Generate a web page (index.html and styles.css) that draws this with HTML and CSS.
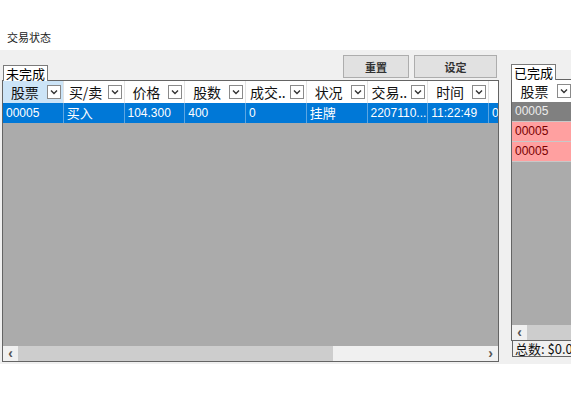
FILE: index.html
```html
<!DOCTYPE html>
<html>
<head>
<meta charset="utf-8">
<link rel="stylesheet" href="styles.css">
</head>
<body>
<div class="title">交易状态</div>
<div class="main">
  <div class="left">
    <div class="bar">
      <div class="tab">未完成</div>
      <div class="btns">
        <div class="btn b1">重置</div>
        <div class="btn b2">设定</div>
      </div>
    </div>
    <div class="grid">
      <div class="hrow">
        <div class="hc sel"><span class="ht">股票</span><span class="dd"><svg viewBox="0 0 8 8" width="8" height="8"><path d="M1 2.5 L4 5.5 L7 2.5" fill="none" stroke="#333" stroke-width="1.4"/></svg></span></div>
        <div class="hc"><span class="ht">买/卖</span><span class="dd"><svg viewBox="0 0 8 8" width="8" height="8"><path d="M1 2.5 L4 5.5 L7 2.5" fill="none" stroke="#333" stroke-width="1.4"/></svg></span></div>
        <div class="hc"><span class="ht">价格</span><span class="dd"><svg viewBox="0 0 8 8" width="8" height="8"><path d="M1 2.5 L4 5.5 L7 2.5" fill="none" stroke="#333" stroke-width="1.4"/></svg></span></div>
        <div class="hc"><span class="ht">股数</span><span class="dd"><svg viewBox="0 0 8 8" width="8" height="8"><path d="M1 2.5 L4 5.5 L7 2.5" fill="none" stroke="#333" stroke-width="1.4"/></svg></span></div>
        <div class="hc"><span class="ht">成交..</span><span class="dd"><svg viewBox="0 0 8 8" width="8" height="8"><path d="M1 2.5 L4 5.5 L7 2.5" fill="none" stroke="#333" stroke-width="1.4"/></svg></span></div>
        <div class="hc"><span class="ht">状况</span><span class="dd"><svg viewBox="0 0 8 8" width="8" height="8"><path d="M1 2.5 L4 5.5 L7 2.5" fill="none" stroke="#333" stroke-width="1.4"/></svg></span></div>
        <div class="hc"><span class="ht">交易..</span><span class="dd"><svg viewBox="0 0 8 8" width="8" height="8"><path d="M1 2.5 L4 5.5 L7 2.5" fill="none" stroke="#333" stroke-width="1.4"/></svg></span></div>
        <div class="hc"><span class="ht">时间</span><span class="dd"><svg viewBox="0 0 8 8" width="8" height="8"><path d="M1 2.5 L4 5.5 L7 2.5" fill="none" stroke="#333" stroke-width="1.4"/></svg></span></div>
        <div class="hc last"></div>
      </div>
      <div class="drow">
        <div class="dc">00005</div>
        <div class="dc cjk">买入</div>
        <div class="dc">104.300</div>
        <div class="dc">400</div>
        <div class="dc">0</div>
        <div class="dc cjk">挂牌</div>
        <div class="dc">2207110...</div>
        <div class="dc">11:22:49</div>
        <div class="dc last">0</div>
      </div>
      <div class="fill"></div>
      <div class="hscroll">
        <div class="arr">&#x2039;</div>
        <div class="thumb"></div>
        <div class="track"></div>
        <div class="arr">&#x203A;</div>
      </div>
    </div>
  </div>
  <div class="right">
    <div class="tab tab2">已完成</div>
    <div class="grid2">
      <div class="hrow">
        <div class="hc"><span class="ht">股票</span><span class="dd"><svg viewBox="0 0 8 8" width="8" height="8"><path d="M1 2.5 L4 5.5 L7 2.5" fill="none" stroke="#333" stroke-width="1.4"/></svg></span></div>
      </div>
      <div class="r2 gray">00005</div>
      <div class="r2 pink">00005</div>
      <div class="r2 pink">00005</div>
      <div class="fill2"></div>
      <div class="hscroll2">
        <div class="arr">&#x2039;</div>
        <div class="thumb2"></div>
      </div>
    </div>
    <div class="total">总数: $0.00</div>
  </div>
</div>
</body>
</html>
```

FILE: styles.css
```css
html, body {
  margin: 0;
  padding: 0;
  background: #ffffff;
  font-family: "Liberation Sans", "Noto Sans CJK SC", sans-serif;
  color: #000;
  width: 571px;
  height: 393px;
  overflow: hidden;
}

.title {
  height: 50px;
  box-sizing: border-box;
  padding: 31px 0 0 7px;
  font-size: 11px;
  line-height: 13px;
  font-family: "Noto Sans CJK SC", sans-serif;
  color: #222;
}

.main {
  display: flex;
  height: 314px;
  background: #f0f0f0;
}

.left {
  width: 502px;
  flex: none;
  display: flex;
  flex-direction: column;
}

.bar {
  height: 30px;
  display: flex;
  justify-content: space-between;
  padding: 0 0 0 3px;
}

.tab {
  align-self: flex-end;
  height: 16px;
  margin-bottom: -1px;
  box-sizing: border-box;
  border: 1px solid #7a7a7a;
  border-bottom: none;
  background: #fff;
  font-family: "Noto Sans CJK SC", sans-serif;
  font-size: 13px;
  line-height: 15px;
  padding: 0 2px;
  white-space: nowrap;
  position: relative;
  z-index: 1;
}

.btns {
  display: flex;
  gap: 5px;
  margin-top: 5px;
  padding-right: 5px;
}

.btn {
  height: 23px;
  box-sizing: border-box;
  background: #e1e1e1;
  border: 1px solid #adadad;
  font-family: "Noto Sans CJK SC", sans-serif;
  font-size: 11px;
  font-weight: bold;
  color: #333;
  display: flex;
  align-items: center;
  justify-content: center;
}

.b1 { width: 66px; }
.b2 { width: 83px; }

.grid {
  margin-left: 2px;
  width: 497px;
  height: 282px;
  box-sizing: border-box;
  border: 1px solid #646464;
  display: flex;
  flex-direction: column;
  background: #ababab;
  overflow: hidden;
}

.hrow {
  display: flex;
  height: 22px;
  background: #fff;
  flex: none;
}

.hc {
  width: 60.75px;
  flex: none;
  box-sizing: border-box;
  border-right: 1px solid #e3e3e3;
  display: flex;
  align-items: center;
  padding-right: 2px;
}

.hc.sel { background: #cce4f7; }
.hc.last { flex: 1; border-right: none; }

.ht {
  flex: 1;
  text-align: center;
  font-family: "Noto Sans CJK SC", sans-serif;
  font-size: 14px;
  line-height: 16px;
  color: #111;
  white-space: nowrap;
}

.dd {
  width: 14px;
  height: 14px;
  box-sizing: border-box;
  border: 1px solid #8a8a8a;
  background: #fff;
  display: flex;
  align-items: center;
  justify-content: center;
  flex: none;
}

.drow {
  display: flex;
  height: 20px;
  background: #0078d7;
  color: #fff;
  flex: none;
}

.dc {
  width: 60.75px;
  flex: none;
  box-sizing: border-box;
  border-right: 1px solid #5ca6e2;
  font-size: 12px;
  line-height: 20px;
  padding-left: 3px;
  white-space: nowrap;
  overflow: hidden;
}

.dc.cjk {
  font-family: "Noto Sans CJK SC", sans-serif;
  font-size: 13px;
}

.dc.last { flex: 1; border-right: none; }

.fill { flex: 1; }

.hscroll {
  height: 15px;
  flex: none;
  display: flex;
  background: #f0f0f0;
}

.arr {
  width: 15px;
  flex: none;
  text-align: center;
  font-size: 14px;
  line-height: 14px;
  font-weight: bold;
  color: #555;
}

.thumb {
  width: 315px;
  background: #cdcdcd;
  flex: none;
}

.track { flex: 1; }

.right {
  flex: 1;
  min-width: 0;
  display: flex;
  flex-direction: column;
  padding-left: 9px;
  padding-top: 14px;
  background: #f0f0f0;
}

.tab2 {
  align-self: flex-start;
}

.grid2 {
  height: 262px;
  box-sizing: border-box;
  border: 1px solid #646464;
  border-right: none;
  background: #ababab;
  display: flex;
  flex-direction: column;
  overflow: hidden;
}

.grid2 .hc {
  width: 61px;
  border-right: none;
}

.r2 {
  height: 19px;
  line-height: 19px;
  font-size: 12px;
  padding-left: 3px;
  border-bottom: 1px solid #c8c8c8;
  flex: none;
}

.gray { background: #808080; color: #ececec; }
.pink { background: #ffa0a0; color: #7a0000; }

.fill2 { flex: 1; }

.hscroll2 {
  height: 15px;
  flex: none;
  display: flex;
  background: #f0f0f0;
}

.thumb2 {
  flex: 1;
  background: #cdcdcd;
}

.total {
  height: 16px;
  box-sizing: border-box;
  border: 1px solid #646464;
  border-top: none;
  border-right: none;
  margin-left: 1px;
  font-family: "Noto Sans CJK SC", sans-serif;
  font-size: 13px;
  line-height: 15px;
  white-space: nowrap;
  overflow: hidden;
  padding-left: 2px;
  color: #111;
}
```
